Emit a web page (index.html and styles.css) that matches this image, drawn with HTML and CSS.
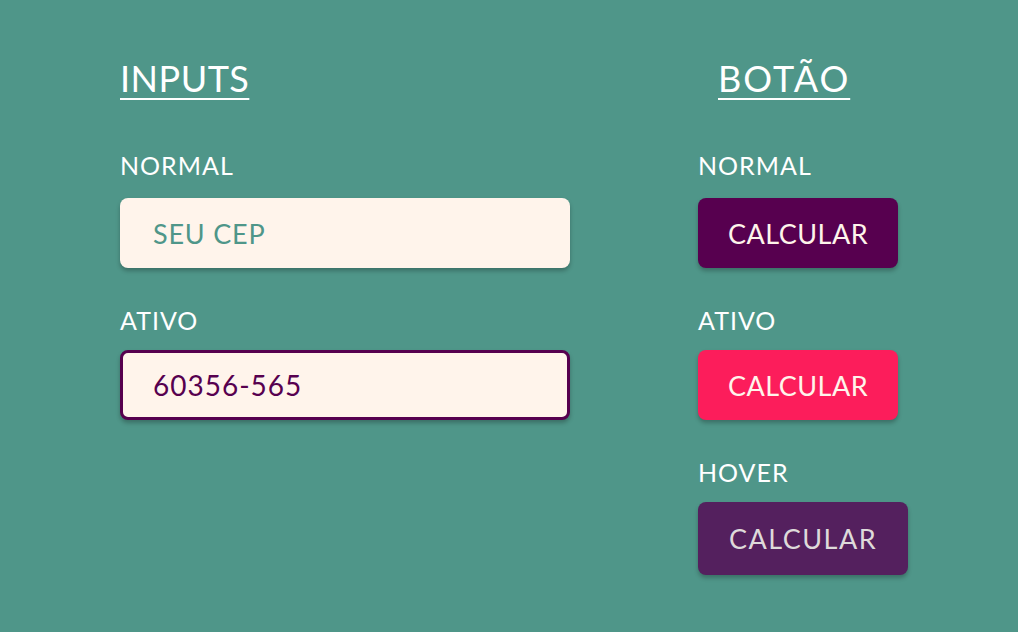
FILE: index.html
```html
<!DOCTYPE html>
<html lang="pt-BR">
<head>
<meta charset="utf-8">
<title>Inputs e Botão</title>
<link rel="stylesheet" href="styles.css">
</head>
<body>
<main class="page">
  <section class="col col-inputs">
    <h1 class="title">INPUTS</h1>
    <div class="field">
      <div class="label">NORMAL</div>
      <div class="input input-normal">SEU CEP</div>
    </div>
    <div class="field">
      <div class="label">ATIVO</div>
      <div class="input input-active">60356-565</div>
    </div>
  </section>
  <section class="col col-buttons">
    <h1 class="title title-btn">BOTÃO</h1>
    <div class="field">
      <div class="label">NORMAL</div>
      <div class="btn btn-normal">CALCULAR</div>
    </div>
    <div class="field">
      <div class="label">ATIVO</div>
      <div class="btn btn-active">CALCULAR</div>
    </div>
    <div class="field">
      <div class="label">HOVER</div>
      <div class="btn btn-hover">CALCULAR</div>
    </div>
  </section>
</main>
</body>
</html>
```
FILE: styles.css
```css
html, body {
  margin: 0;
  padding: 0;
}
body {
  background: #4f9689;
  width: 1018px;
  height: 632px;
  overflow: hidden;
  font-family: Lato, "Noto Sans", sans-serif;
  font-weight: 400;
  color: #ffffff;
}
.page {
  display: flex;
  gap: 128px;
  padding: 59px 0 0 120px;
}
.col {
  display: flex;
  flex-direction: column;
}
.col-inputs {
  width: 450px;
}
.title {
  margin: 0 0 52px 0;
  font-size: 36px;
  line-height: 39px;
  height: 39px;
  font-weight: 400;
  letter-spacing: 0.5px;
  text-decoration: underline;
  text-decoration-thickness: 2px;
  text-underline-offset: 6px;
}
.title-btn {
  padding-left: 20px;
  letter-spacing: 2px;
}
.field {
  display: flex;
  flex-direction: column;
  gap: 15px;
  margin-bottom: 37px;
}
.title + .field {
  gap: 18px;
}
.label {
  font-size: 25px;
  line-height: 30px;
  height: 30px;
  letter-spacing: 1px;
  font-weight: 400;
}
.input {
  box-sizing: border-box;
  width: 450px;
  height: 70px;
  border-radius: 8px;
  background: #fff4eb;
  display: flex;
  align-items: center;
  padding-left: 33px;
  font-size: 27px;
  letter-spacing: 0.8px;
  box-shadow: 0 3px 4px rgba(0, 0, 0, 0.25);
}
.input-normal {
  color: #4f9689;
}
.input-active {
  border: 3px solid #57004f;
  padding-left: 30px;
  color: #57004f;
  font-size: 28px;
  letter-spacing: 1px;
}
.btn {
  box-sizing: border-box;
  width: 200px;
  height: 70px;
  border-radius: 8px;
  display: flex;
  align-items: center;
  justify-content: center;
  font-size: 27px;
  letter-spacing: 0.5px;
  color: #fff4eb;
  box-shadow: 0 3px 4px rgba(0, 0, 0, 0.25);
}
.btn-normal {
  background: #57004f;
}
.btn-active {
  background: #fc1d5b;
}
.btn-hover {
  width: 210px;
  height: 73px;
  background: #54205e;
  color: #dedada;
  font-size: 27px;
  letter-spacing: 1.5px;
}
```
